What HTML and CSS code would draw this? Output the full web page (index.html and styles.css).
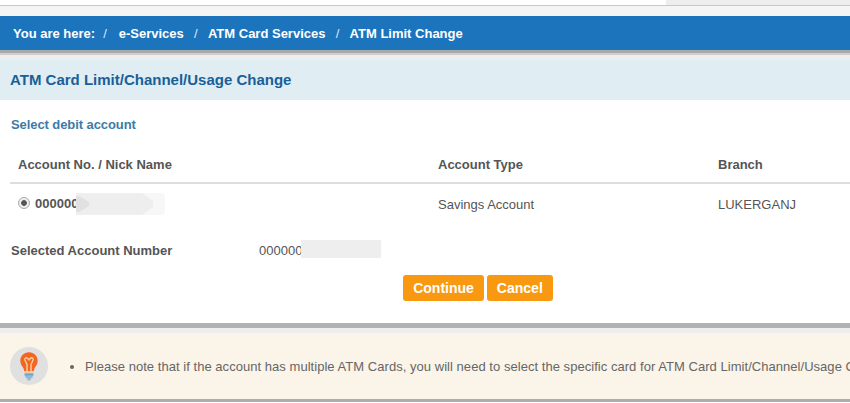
FILE: index.html
```html
<!DOCTYPE html>
<html lang="en">
<head>
    <meta charset="UTF-8">
    <meta name="viewport" content="width=device-width, initial-scale=1.0">
    <title>ATM Limit Change</title>
    <link rel="stylesheet" href="styles.css">
</head>
<body>
    <div class="top-strip">
        <div class="top-strip-tab"></div>
    </div>

    <div class="breadcrumb">
        <span class="crumb-label">You are here:</span>
        <span class="crumb-sep crumb-sep-first">/</span>
        <span>e-Services</span>
        <span class="crumb-sep">/</span>
        <span>ATM Card Services</span>
        <span class="crumb-sep">/</span>
        <span>ATM Limit Change</span>
    </div>

    <div class="card">
        <h2 class="card-title">ATM Card Limit/Channel/Usage Change</h2>
        <h3 class="section-title">Select debit account</h3>

        <table class="account-table">
            <thead>
                <tr>
                    <th class="col-account">Account No. / Nick Name</th>
                    <th class="col-type">Account Type</th>
                    <th>Branch</th>
                </tr>
            </thead>
            <tbody>
                <tr>
                    <td class="account-cell">
                        <span class="radio"></span><b>000000</b><svg class="redact-row" width="89" height="22" viewBox="0 0 89 22">
                            <path d="M0 0H85a4 4 0 0 1 4 4V18a4 4 0 0 1-4 4H0z" fill="#f7f7f7"/>
                            <path d="M0 0H66L77 8V14L66 22H0z" fill="#eeeeee"/>
                            <path d="M0 3H3L13 9V13L3 19H0z" fill="#e1e1e1"/>
                        </svg>
                    </td>
                    <td>Savings Account</td>
                    <td>LUKERGANJ</td>
                </tr>
            </tbody>
        </table>

        <div class="selected-row">
            <span class="selected-label">Selected Account Number</span>
            <span class="selected-value">000000<span class="redact-selected"></span></span>
        </div>

        <div class="actions">
            <button type="button" class="button">Continue</button>
            <button type="button" class="button">Cancel</button>
        </div>
    </div>

    <div class="note">
        <div class="note-icon">
            <svg width="18" height="29" viewBox="0 0 18 29">
                <path d="M9 0.3C4 0.3 0.3 4 0.3 8.8c0 3.4 1.9 5.3 3 7.3 0.6 1.1 0.8 2.1 0.9 3.1h9.6c0.1-1 0.3-2 0.9-3.1 1.1-2 3-3.9 3-7.3C17.7 4 14 0.3 9 0.3z" fill="#f26522"/>
                <path d="M7 19V12.5L4.9 8C4.3 6.3 6.4 5 7.7 6.4L9 7.9 10.3 6.4C11.6 5 13.7 6.3 13.1 8L11 12.5V19" fill="none" stroke="#fcd0a0" stroke-width="1.4"/>
                <path d="M4.2 19.2h9.6v2.2H4.2z" fill="#f9c89a"/>
                <path d="M4.6 21.4h8.8v2.4H4.6z" fill="#62a5d9"/>
                <path d="M5.4 23.8h7.2v2.2H5.4z" fill="#8dbbdd"/>
                <path d="M6.6 26h4.8l-1 2.4H7.6z" fill="#a9b8c4"/>
            </svg>
        </div>
        <ul class="note-list">
            <li>Please note that if the account has multiple ATM Cards, you will need to select the specific card for ATM Card Limit/Channel/Usage Change.</li>
        </ul>
    </div>
</body>
</html>
```

FILE: styles.css
```css
html, body {
    height: 100%;
}
body {
    margin: 0;
    overflow: hidden;
    font-family: "Liberation Sans", Arial, sans-serif;
    font-size: 13px;
    color: #555;
    background-color: #fff;
}
.top-strip {
    height: 5px;
    display: flex;
    justify-content: flex-end;
    border-bottom: 1px solid #c8c8c8;
    background-color: #fff;
}
.top-strip-tab {
    width: 184px;
    background-color: #eee;
}
.breadcrumb {
    margin-top: 10px;
    height: 34px;
    padding-left: 13px;
    display: flex;
    align-items: center;
    background-color: #1b74bc;
    color: #fff;
    font-size: 13px;
    font-weight: bold;
    white-space: nowrap;
    box-shadow: 0 -10px 0 #f5f5f5, 0 3px 0 #a9a9a9, 0 5px 0 #cfcfcf, 0 10px 0 #eee;
}
.crumb-sep {
    margin: 0 10.25px;
    font-weight: normal;
    color: #dce9f4;
}
.crumb-sep-first {
    margin: 0 12px 0 8px;
}
.card {
    margin-top: 10px;
    height: 263px;
    background-color: #fff;
    box-shadow: 0 5px 0 #b2b2b2, 0 10px 0 #eee;
}
.card-title {
    margin: 0;
    height: 40px;
    padding-left: 10px;
    line-height: 40px;
    background-color: #e0edf2;
    color: #195f99;
    font-size: 15px;
    font-weight: bold;
}
.section-title {
    margin: 0;
    padding: 17px 0 0 11px;
    line-height: 15px;
    color: #3d7aa8;
    font-size: 13px;
    font-weight: bold;
    letter-spacing: -0.08px;
}
.account-table {
    width: 840px;
    margin: 15px 0 0 10px;
    border-collapse: collapse;
    table-layout: fixed;
}
.account-table th {
    height: 35px;
    padding: 0 0 0 8px;
    text-align: left;
    font-size: 13px;
    color: #555;
    border-bottom: 2px solid #ddd;
}
.account-table td {
    height: 40px;
    padding: 0 0 2px 8px;
    font-size: 13px;
}
.col-account {
    width: 412px;
}
.col-type {
    width: 272px;
}
.account-cell {
    white-space: nowrap;
}
.radio {
    display: inline-block;
    width: 12px;
    height: 12px;
    margin: 0 5px 0 0;
    vertical-align: -1px;
    box-sizing: border-box;
    border: 1px solid #aaa;
    border-radius: 50%;
    background: radial-gradient(circle, #555 0, #555 2.5px, #eee 3.2px);
}
.redact-row {
    vertical-align: -7px;
    margin-left: -2px;
}
.redact-selected {
    display: inline-block;
    vertical-align: -3px;
    width: 80px;
    height: 18px;
    margin: -4px 0 0 -1px;
    background-color: #eee;
}
.selected-row {
    display: flex;
    padding-left: 11px;
    margin-top: 16px;
    line-height: 18px;
}
.selected-label {
    width: 248px;
    font-weight: bold;
}
.selected-value {
    white-space: nowrap;
}
.actions {
    display: flex;
    justify-content: center;
    gap: 3px;
    margin-top: 15px;
    padding-left: 106px;
}
.button {
    height: 26px;
    padding: 0 10px;
    border: 0;
    border-radius: 3px;
    background-color: #f99911;
    color: #fff;
    font-family: "Liberation Sans", Arial, sans-serif;
    font-size: 14px;
    font-weight: bold;
}
.note {
    margin-top: 10px;
    height: 66px;
    display: flex;
    align-items: center;
    padding-left: 10px;
    background-color: #fbf4e9;
    border-bottom: 3px solid #aeaeae;
    white-space: nowrap;
}
.note-icon {
    flex: none;
    width: 38px;
    height: 38px;
    display: flex;
    align-items: center;
    justify-content: center;
    border-radius: 50%;
    background-color: #e0e0e0;
}
.note-list {
    margin: 0;
    padding: 0 0 0 37px;
    font-size: 13px;
    letter-spacing: 0.04px;
    color: #666;
}
```
